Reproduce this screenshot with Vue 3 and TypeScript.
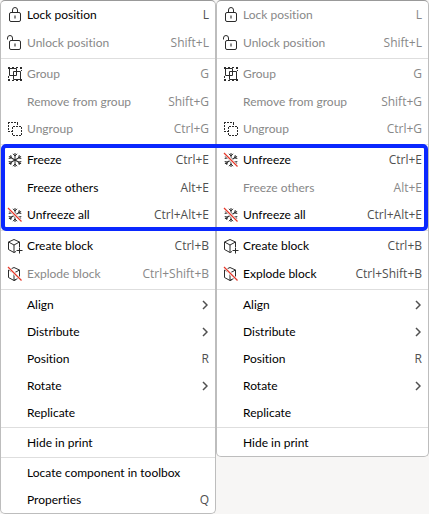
<script setup lang="ts">
type IconName = 'lock' | 'unlock' | 'group' | 'ungroup' | 'freeze' | 'unfreeze' | 'block' | 'explode'

interface MenuItem {
  label: string
  keys?: string
  icon?: IconName
  disabled?: boolean
  submenu?: boolean
}

interface Menu {
  name: string
  sections: MenuItem[][]
}

const arrange: MenuItem[] = [
  { label: 'Align', submenu: true },
  { label: 'Distribute', submenu: true },
  { label: 'Position', keys: 'R' },
  { label: 'Rotate', submenu: true },
  { label: 'Replicate' },
]

const grouping: MenuItem[] = [
  { label: 'Group', keys: 'G', icon: 'group', disabled: true },
  { label: 'Remove from group', keys: 'Shift+G', disabled: true },
  { label: 'Ungroup', keys: 'Ctrl+G', icon: 'ungroup', disabled: true },
]

const menus: Menu[] = [
  {
    name: 'Component menu',
    sections: [
      [
        { label: 'Lock position', keys: 'L', icon: 'lock' },
        { label: 'Unlock position', keys: 'Shift+L', icon: 'unlock', disabled: true },
      ],
      grouping,
      [
        { label: 'Freeze', keys: 'Ctrl+E', icon: 'freeze' },
        { label: 'Freeze others', keys: 'Alt+E' },
        { label: 'Unfreeze all', keys: 'Ctrl+Alt+E', icon: 'unfreeze' },
      ],
      [
        { label: 'Create block', keys: 'Ctrl+B', icon: 'block' },
        { label: 'Explode block', keys: 'Ctrl+Shift+B', icon: 'explode', disabled: true },
      ],
      arrange,
      [{ label: 'Hide in print' }],
      [{ label: 'Locate component in toolbox' }, { label: 'Properties', keys: 'Q' }],
    ],
  },
  {
    name: 'Frozen component menu',
    sections: [
      [
        { label: 'Lock position', keys: 'L', icon: 'lock', disabled: true },
        { label: 'Unlock position', keys: 'Shift+L', icon: 'unlock', disabled: true },
      ],
      grouping,
      [
        { label: 'Unfreeze', keys: 'Ctrl+E', icon: 'unfreeze' },
        { label: 'Freeze others', keys: 'Alt+E', disabled: true },
        { label: 'Unfreeze all', keys: 'Ctrl+Alt+E', icon: 'unfreeze' },
      ],
      [
        { label: 'Create block', keys: 'Ctrl+B', icon: 'block' },
        { label: 'Explode block', keys: 'Ctrl+Shift+B', icon: 'explode' },
      ],
      arrange,
      [{ label: 'Hide in print' }],
    ],
  },
]

const arms = [0, 60, 120, 180, 240, 300]
</script>

<template>
  <main class="board">
    <div v-for="menu in menus" :key="menu.name" class="menu" role="menu" :aria-label="menu.name">
      <div v-for="(section, s) in menu.sections" :key="s" class="section" role="group">
        <button
          v-for="item in section"
          :key="item.label"
          type="button"
          role="menuitem"
          class="item"
          :class="{ tall: item.icon }"
          :disabled="item.disabled"
        >
          <span class="slot">
            <svg v-if="item.icon" class="icon" viewBox="0 0 16 16" aria-hidden="true">
              <template v-if="item.icon === 'lock'">
                <rect x="2.5" y="5.5" width="11" height="9" rx="1.5" />
                <path d="M5.5 5.5V3a2.5 2.5 0 0 1 5 0v2.5" />
                <path class="keyhole" d="M8 8.5v3" />
              </template>
              <template v-else-if="item.icon === 'unlock'">
                <rect x="2.5" y="5.5" width="11" height="9" rx="1.5" />
                <path d="M.5 4.5V3a2.5 2.5 0 0 1 5 0v2.5" />
                <path class="keyhole" d="M8 8.5v3" />
              </template>
              <template v-else-if="item.icon === 'group'">
                <path d="M2.5 2.5h7v7h-7zM6.500 5.500h7v8h-7z" />
                <path class="solid" d="M1 1h2v2H1zM13 1h2v2h-2zM1 13h2v2H1zM13 13h2v2h-2zM5 1h2v1H5zM9 1h2v1H9zM5 14h2v1H5zM9 14h2v1H9zM1 10h1v2H1zM14 4h1v1h-1z" />
              </template>
              <template v-else-if="item.icon === 'ungroup'">
                <path
                  class="solid"
                  d="M1 1h2v1H2v1H1zM4 1h2v1H4zM7 1h2v1H7zM10 1h1v3h-1zM1 4h1v2H1zM1 7h1v2H1zM1 10h2v1H1zM4 10h1v1H4zM6 5h2v1H6v2H5V6h1zM9 5h2v1H9zM12 5h2v1h1v2h-1V6h-2zM5 9h1v2H5zM14 9h1v2h-1zM5 12h1v2h2v1H6v-1H5zM9 14h2v1H9zM14 12h1v2h-1v1h-2v-1h2z"
                />
              </template>
              <template v-else-if="item.icon === 'freeze' || item.icon === 'unfreeze'">
                <path
                  v-for="angle in arms"
                  :key="angle"
                  d="M8 8V1M6 1.8 8 4l2-2.2"
                  :transform="`rotate(${angle} 8 8)`"
                />
              </template>
              <template v-else>
                <path d="M7 1.5 12.5 4v5M9 13.5l-2 1-5.500-3V4L7 1.5M1.5 4 7 7l5.500-3M7 7v7.5" />
                <path v-if="item.icon === 'block'" d="M12.5 9.5v6M9.5 12.5h6" />
                <path v-else d="M12.5 9v2.5L7 14.5" />
              </template>
              <template v-if="item.icon === 'unfreeze' || item.icon === 'explode'">
                <path class="gap" d="M1 1l13.5 13.5" />
                <path class="strike" d="M1 1l13.5 13.5" />
              </template>
            </svg>
          </span>
          <span class="label">{{ item.label }}</span>
          <svg v-if="item.submenu" class="chevron" viewBox="0 0 6 10" aria-hidden="true">
            <path d="M1 1l4 4-4 4" />
          </svg>
          <kbd v-else-if="item.keys" class="keys">{{ item.keys }}</kbd>
        </button>
      </div>
    </div>
    <div class="highlight"></div>
  </main>
</template>

<style>
body {
  margin: 0;
  background: #f7f6f5;
}
</style>

<style scoped>
.board {
  position: relative;
  display: grid;
  grid-template-columns: 216fr 213fr;
  align-items: start;
  font-family: Lato, "Open Sans", sans-serif;
  font-size: 12px;
  font-variant-ligatures: none;
}

.menu {
  background: #fff;
  border: 1px solid #bdbdbd;
  border-top-color: #999;
  border-radius: 5px;
}

.section + .section::before {
  content: "";
  display: block;
  height: 1px;
  margin: 1px 0;
  background: #dedede;
}

.item {
  display: flex;
  align-items: baseline;
  width: 100%;
  height: 27px;
  padding: 6px 6px 0;
  border: 0;
  background: none;
  color: #000;
  font: inherit;
  line-height: 16px;
  text-align: left;
  white-space: nowrap;
}

.item.tall {
  height: 28px;
}

.item:not(:disabled):hover {
  background: #f0f0f0;
}

.item:disabled {
  color: #888;
}

.slot {
  flex: none;
  align-self: flex-start;
  width: 20px;
  height: 16px;
}

.icon {
  display: block;
  width: 16px;
  height: 16px;
  fill: none;
  stroke: #2b2b2b;
  stroke-width: 1;
}

.keyhole {
  stroke: #8a8a8a;
  stroke-width: 2;
}

.solid {
  fill: #2b2b2b;
  stroke: none;
}

.gap {
  stroke: #fff;
  stroke-width: 3;
}

.strike {
  stroke: #e6382a;
  stroke-width: 1.25;
}

.label {
  flex: 1;
}

.keys {
  color: #505050;
  font: inherit;
  font-family: "Open Sans", sans-serif;
}

.item:disabled .keys {
  color: #888;
}

.chevron {
  align-self: flex-start;
  width: 6px;
  height: 10px;
  margin: 3px 1px 0 0;
  fill: none;
  stroke: #505050;
  stroke-width: 1.5;
}

.highlight {
  position: absolute;
  top: 144px;
  left: 1px;
  right: 1px;
  height: 87px;
  box-sizing: border-box;
  border: 4px solid #0a28ff;
  border-radius: 5px;
  pointer-events: none;
}
</style>
